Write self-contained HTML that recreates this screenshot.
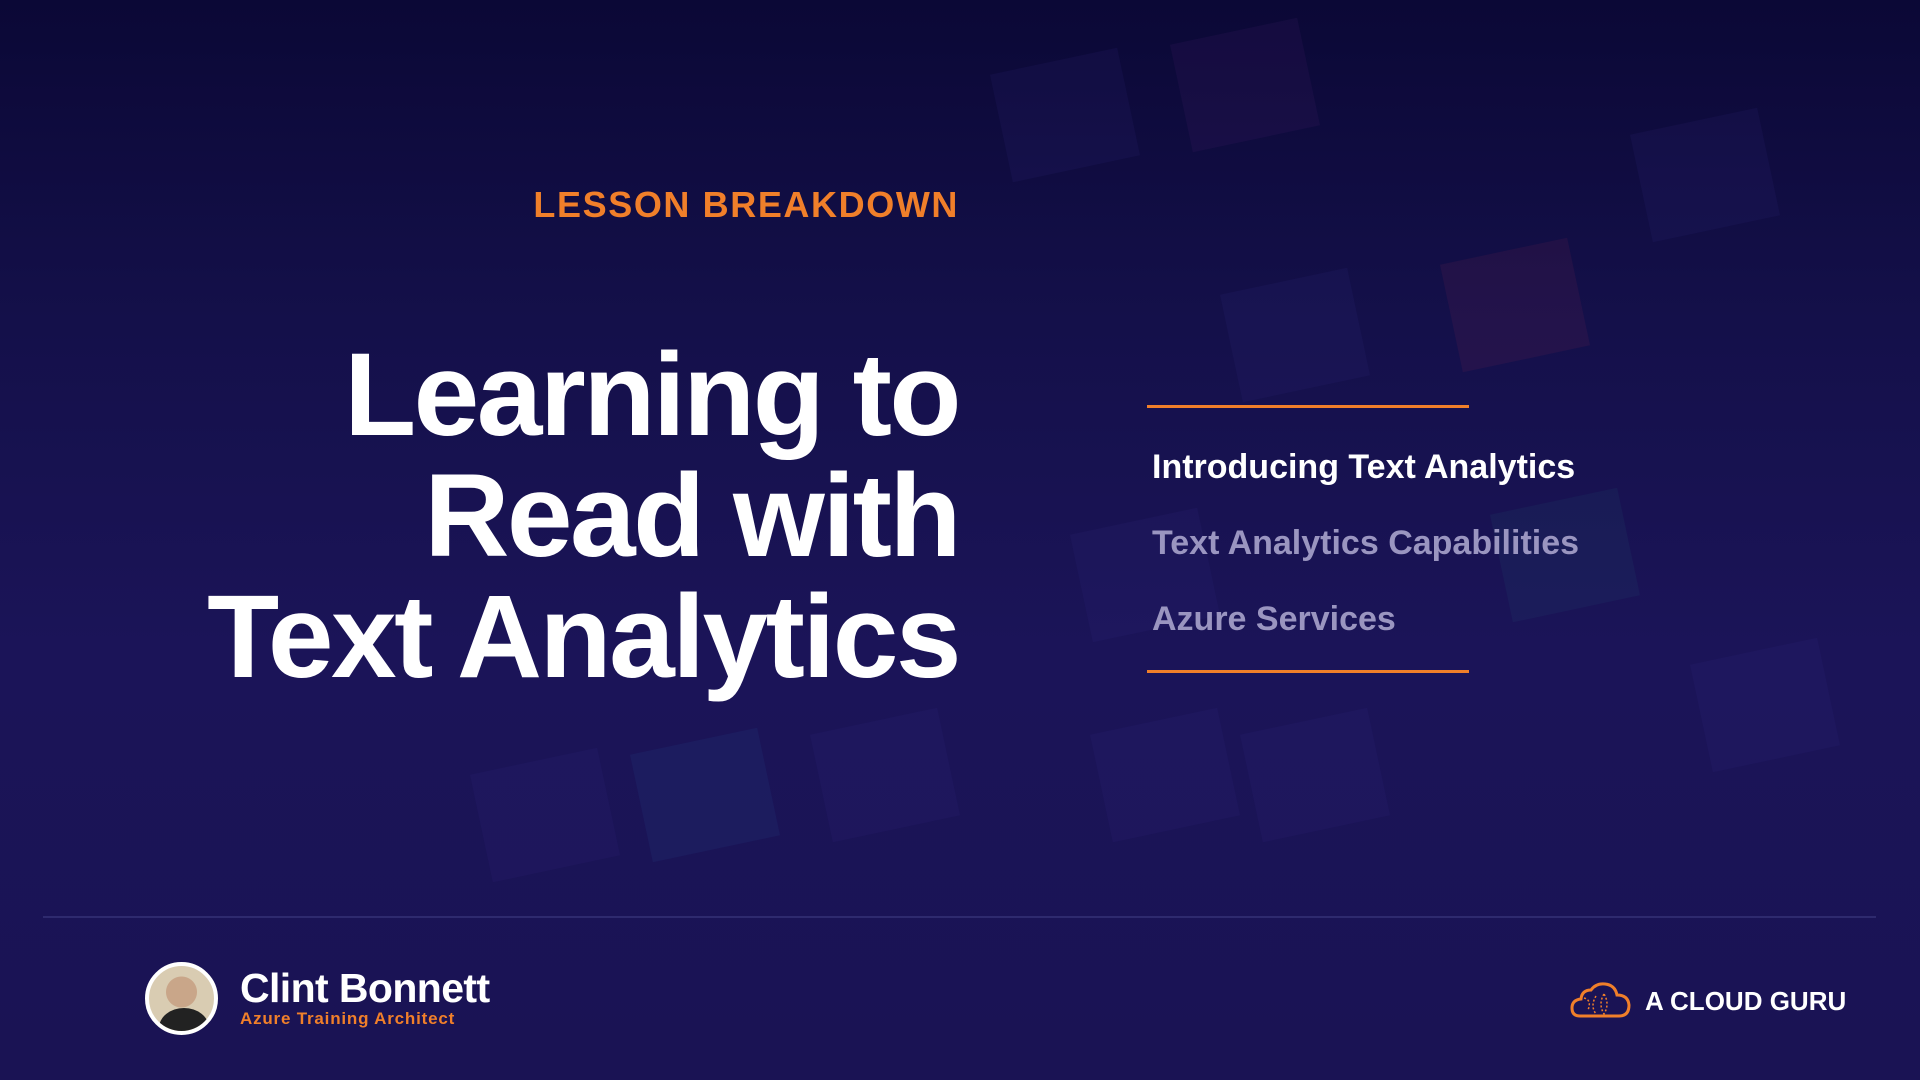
<!DOCTYPE html>
<html><head><meta charset="utf-8"><style>
*{margin:0;padding:0;box-sizing:border-box}
body{width:1920px;height:1080px;overflow:hidden;font-family:"Liberation Sans",sans-serif;
background:linear-gradient(180deg,#0b0836 0%,#14104a 30%,#1b1458 60%,#1a1354 100%);position:relative}
.tiles{position:absolute;left:0;top:0;width:1920px;height:1080px;overflow:hidden}
.tile{position:absolute;width:130px;height:110px;background:rgba(60,50,140,0.12);transform:rotate(-12deg)}
.lb{position:absolute;right:961px;top:184px;color:#f07f2a;font-weight:bold;font-size:36px;letter-spacing:1.6px}
.title{position:absolute;right:961px;top:335px;color:#fff;font-weight:bold;font-size:118px;line-height:121px;text-align:right;letter-spacing:-2.5px}
.hl{position:absolute;left:1147px;width:322px;height:3px;background:#f07f2a}
.item{position:absolute;left:1152px;font-weight:bold;font-size:34px;letter-spacing:0px}
.div{position:absolute;left:43px;top:916px;width:1833px;height:2px;background:#2e2a6e}
.av{position:absolute;left:145px;top:962px;width:73px;height:73px;border-radius:50%;border:4px solid #fff;background:radial-gradient(circle at 50% 40%,#c9a689 0 30%,#d9ccb2 31%);overflow:hidden}
.av:after{content:"";position:absolute;left:10px;top:42px;width:50px;height:40px;border-radius:50% 50% 0 0;background:#222}
.name{position:absolute;left:240px;top:965px;color:#fff;font-weight:bold;font-size:41px;letter-spacing:-0.6px}
.role{position:absolute;left:240px;top:1009px;color:#f07f2a;font-weight:bold;font-size:17px;letter-spacing:0.8px}
.logo{position:absolute;left:1645px;top:986px;color:#fff;font-weight:bold;font-size:26px}
</style></head><body>
<div class="tiles">
<div class="tile" style="left:1000px;top:60px"></div>
<div class="tile" style="left:1180px;top:30px;background:rgba(90,40,120,.12)"></div>
<div class="tile" style="left:1450px;top:250px;background:rgba(150,40,80,.12)"></div>
<div class="tile" style="left:1230px;top:280px"></div>
<div class="tile" style="left:1500px;top:500px;background:rgba(40,110,130,.1)"></div>
<div class="tile" style="left:1080px;top:520px"></div>
<div class="tile" style="left:1100px;top:720px"></div>
<div class="tile" style="left:1250px;top:720px"></div>
<div class="tile" style="left:640px;top:740px;background:rgba(40,90,160,.12)"></div>
<div class="tile" style="left:820px;top:720px"></div>
<div class="tile" style="left:480px;top:760px"></div>
<div class="tile" style="left:1640px;top:120px"></div>
<div class="tile" style="left:1700px;top:650px"></div>
</div>
<div class="lb">LESSON BREAKDOWN</div>
<div class="title">Learning to<br>Read with<br>Text Analytics</div>
<div class="hl" style="top:405px"></div>
<div class="item" style="top:448px;color:#fff">Introducing Text Analytics</div>
<div class="item" style="top:524px;color:#9a95c0">Text Analytics Capabilities</div>
<div class="item" style="top:600px;color:#9a95c0">Azure Services</div>
<div class="hl" style="top:670px"></div>
<div class="div"></div>
<div class="av"></div>
<div class="name">Clint Bonnett</div>
<div class="role">Azure Training Architect</div>
<svg style="position:absolute;left:1570px;top:980px" width="62" height="40" viewBox="0 0 62 40">
<path d="M10 36 Q2 36 2 28 Q2 20 11 19 Q12 10 21 10 Q26 3 35 4 Q45 5 47 15 Q58 15 59 25 Q59 36 49 36 Z" fill="none" stroke="#f07f2a" stroke-width="3"/>
<path d="M14 18 Q22 20 18 30 M26 16 Q20 26 26 34 M34 14 Q28 24 34 34 Q40 24 34 14" fill="none" stroke="#f07f2a" stroke-width="1.5" stroke-dasharray="2 2"/>
</svg>
<div class="logo">A CLOUD GURU</div>
</body></html>
